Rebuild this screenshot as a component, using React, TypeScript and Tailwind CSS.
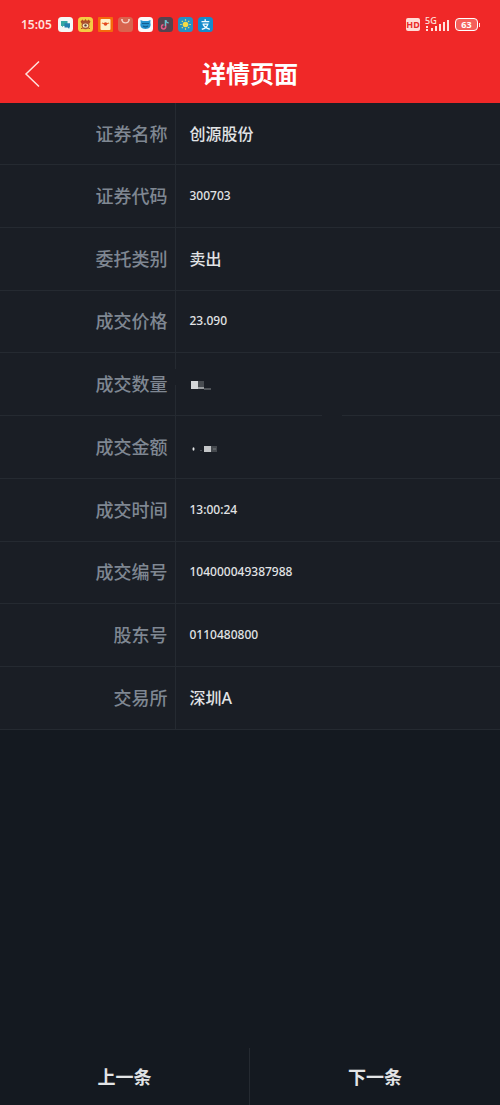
import React from 'react';

type Row = {
  label: string;
  value: React.ReactNode;
  numeric?: boolean;
  masked?: boolean;
};

const MaskedAmount: React.FC = () => (
  <svg className="block h-3 w-8" viewBox="0 0 32 12" shapeRendering="crispEdges" role="img" aria-label="已隐藏">
    <rect x="1" y="3" width="7" height="8" fill="#d3d5d7" />
    <rect x="8" y="3" width="6" height="7" fill="#484c51" />
    <rect x="8" y="9" width="6" height="2" fill="#999c9f" />
    <rect x="14" y="10" width="7" height="2" fill="#4e5257" />
  </svg>
);

const MaskedTotal: React.FC = () => (
  <svg className="block h-3 w-8" viewBox="0 0 32 12" role="img" aria-label="已隐藏">
    <ellipse cx="3.5" cy="8" rx="1" ry="1.7" fill="#e6e8ea" />
    <rect x="10" y="9" width="2" height="1" fill="#4b4f55" />
    <rect x="14" y="5" width="7" height="6" fill="#c4c6c8" />
    <rect x="21" y="5" width="6" height="6" fill="#44484d" />
    <rect x="23" y="7" width="3" height="2" fill="#5c6064" />
  </svg>
);

const rows: Row[] = [
  { label: '证券名称', value: '创源股份' },
  { label: '证券代码', value: '300703', numeric: true },
  { label: '委托类别', value: '卖出' },
  { label: '成交价格', value: '23.090', numeric: true },
  { label: '成交数量', value: <MaskedAmount />, masked: true },
  { label: '成交金额', value: <MaskedTotal /> },
  { label: '成交时间', value: '13:00:24', numeric: true },
  { label: '成交编号', value: '104000049387988', numeric: true },
  { label: '股东号', value: '0110480800', numeric: true },
  { label: '交易所', value: '深圳A' },
];

const NotificationIcons: React.FC = () => (
  <div className="flex items-center gap-[5px]" aria-hidden="true">
    {/* Chat */}
    <svg className="size-[15px]" viewBox="0 0 15 15">
      <rect width="15" height="15" rx="3.5" fill="#f4f8f5" />
      <path d="M3 4h6.5v5H5.2L4 10.2V9H3z" fill="#35a9a4" />
      <path d="M6.5 6.2H12v4.3h-.8v1.4l-1.5-1.4H6.5z" fill="#247fae" />
    </svg>
    {/* Mascot */}
    <svg className="size-[15px]" viewBox="0 0 15 15">
      <rect width="15" height="15" rx="3.5" fill="#f4cc43" />
      <path d="M2.5 4.5 4.5 2.5 6 4l1.5-2L9 4l1.5-1.5 2 2-1 2h-8z" fill="#b24c24" />
      <circle cx="7.5" cy="8.3" r="3.9" fill="#a95532" />
      <ellipse cx="7.5" cy="8.6" rx="2.8" ry="2.2" fill="#f8e7bb" />
      <circle cx="7.5" cy="8.4" r="1.2" fill="#593e32" />
      <path d="M3 11.5h1.5M10.5 11.5H12" stroke="#b24c24" />
    </svg>
    {/* Red packet */}
    <svg className="size-[15px]" viewBox="0 0 15 15">
      <rect width="15" height="15" rx="1" fill="#f46b0b" />
      <rect x="2.5" y="2" width="10" height="11" rx="1" fill="#fff1c9" />
      <path d="M4 5.8c1 1.2 6 1.2 7 0" fill="none" stroke="#ee6e2d" strokeWidth="1.3" />
      <circle cx="7.5" cy="7" r="1.8" fill="#e34b23" />
    </svg>
    {/* Shopping bag */}
    <svg className="size-[15px]" viewBox="0 0 15 15">
      <rect width="15" height="15" rx="3.5" fill="#d8644f" />
      <path d="M4 2.5c0 4.5 7 4.5 7 0" fill="none" stroke="#f7d4ca" strokeWidth="1.2" />
      <circle cx="4" cy="2.8" r=".9" fill="#f7d4ca" />
      <circle cx="11" cy="2.8" r=".9" fill="#f7d4ca" />
    </svg>
    {/* Blue cat */}
    <svg className="size-[15px]" viewBox="0 0 15 15">
      <rect width="15" height="15" rx="3.5" fill="#fafafa" />
      <path d="M2.5 3 5 4h5l2.5-1-.2 3c1.2 3-.8 6-4.8 6s-6-3-4.8-6z" fill="#2793cf" />
      <path d="M4 6.5h7M5 9c1.5 1 3.5 1 5 0" fill="none" stroke="#135e91" strokeWidth="1.2" />
    </svg>
    {/* Music note */}
    <svg className="size-[15px]" viewBox="0 0 15 15">
      <rect width="15" height="15" rx="3.5" fill="#54434f" />
      <path d="M7.7 3v6.8a2.1 2.1 0 1 1-2.2-2.1" fill="none" stroke="#e45a88" strokeWidth="1.5" />
      <path d="M7.7 3c.3 1.8 1.4 2.8 3 2.9M7.4 3v6" fill="none" stroke="#66c4cf" strokeWidth="1.3" />
    </svg>
    {/* Weather */}
    <svg className="size-[15px]" viewBox="0 0 15 15">
      <rect width="15" height="15" rx="3.5" fill="#2590c4" />
      <path
        d="M7.5 2.2v1.5M7.5 11.3v1.5M2.2 7.5h1.5M11.3 7.5h1.5M3.8 3.8l1 1M10.2 10.2l1 1M3.8 11.2l1-1M10.2 4.8l1-1"
        stroke="#e9dc6b"
        strokeWidth="1.2"
      />
      <circle cx="7.5" cy="7.5" r="2.8" fill="#f5dc45" />
    </svg>
    {/* Payment */}
    <svg className="size-[15px]" viewBox="0 0 15 15">
      <rect width="15" height="15" rx="3.5" fill="#168bcb" />
      <path
        d="M7.2 2.3v3M3.5 4.6h7.8M4.6 7.1h5.2c-.6 2.4-2.6 4.4-6 5.2M5 7.3c1.2 2.6 3.6 4.2 6.8 4.9"
        fill="none"
        stroke="#f2fafd"
        strokeWidth="1.4"
      />
    </svg>
  </div>
);

const SystemIcons: React.FC = () => (
  <div className="flex items-center text-[#ffe1dc]">
    <span className="mr-[5px] flex h-[13px] w-[14px] items-center justify-center rounded-xs bg-[#ffdcd6] text-[9px] leading-none font-bold text-[#e92b29]">
      HD
    </span>
    <div className="mr-[6px] grid h-4 w-6">
      <span className="col-start-1 row-start-1 text-[9px] leading-[8px] font-medium">5G</span>
      <svg className="col-start-1 row-start-1 h-4 w-6" viewBox="0 0 24 16" fill="currentColor" aria-hidden="true">
        <path d="M1 9h2v2H1zM1 12h2v2H1zM6 11h2v3H6zM10 9h2v5h-2zM14 7h2v7h-2zM18 5h2v9h-2zM22 3h2v11h-2z" />
      </svg>
    </div>
    <div className="flex items-center">
      <span className="flex h-[13px] w-[23px] items-center justify-center rounded border border-current bg-[#f4605a] text-[9px] leading-none font-bold text-white">
        63
      </span>
      <span className="ml-px h-1 w-px bg-current" />
    </div>
  </div>
);

const App: React.FC = () => {
  return (
    <div className="flex min-h-screen flex-col bg-[#141920] font-['Noto_Sans','Noto_Sans_CJK_SC',sans-serif] text-[#e2e4e6]">
      <header className="bg-[#f02828] text-white">
        <div className="flex h-[49px] items-center justify-between pr-5 pl-[21px]">
          <div className="flex items-center gap-[6px]">
            <time className="text-xs font-semibold text-[#ffe0dc]">15:05</time>
            <NotificationIcons />
          </div>
          <SystemIcons />
        </div>
        <div className="grid h-[54px] grid-cols-[64px_1fr_64px] items-center pb-1">
          <button type="button" aria-label="返回" className="flex h-full items-center pl-6">
            <svg className="h-7 w-4" viewBox="0 0 16 28" fill="none" stroke="#ffe2dd" strokeWidth="1.5">
              <path d="M15 1.5 2 14l13 12.5" />
            </svg>
          </button>
          <h1 className="text-center text-2xl font-bold">详情页面</h1>
        </div>
      </header>

      {/* Trade details */}
      <main className="flex-1">
        <table className="h-[627px] w-full table-fixed border-collapse bg-[#1a1e25]">
          <colgroup>
            <col className="w-[35%]" />
            <col />
          </colgroup>
          <tbody>
            {rows.map((row) => (
              <tr key={row.label} className="border-b border-[#252a31]">
                <th
                  scope="row"
                  className="relative border-r border-[#252a31] p-0 pr-[7px] text-right text-lg leading-6 font-medium text-[#7f8792]"
                >
                  {row.label}
                  {row.masked && <span className="absolute top-4 -right-px h-4 w-[2px] bg-[#1a1e25]" />}
                </th>
                <td
                  className={`relative p-0 pl-[14px] font-medium ${row.numeric ? 'text-xs leading-6' : 'text-base leading-6'}`}
                >
                  {row.value}
                  {row.masked && <span className="absolute -bottom-px left-[45%] h-[2px] w-5 bg-[#1a1e25]" />}
                </td>
              </tr>
            ))}
          </tbody>
        </table>
      </main>

      {/* Prev / next record */}
      <nav className="grid h-[57px] grid-cols-2 text-lg font-bold">
        <button type="button" className="border-r border-[#252a31]">
          上一条
        </button>
        <button type="button">下一条</button>
      </nav>
    </div>
  );
};

export default App;
